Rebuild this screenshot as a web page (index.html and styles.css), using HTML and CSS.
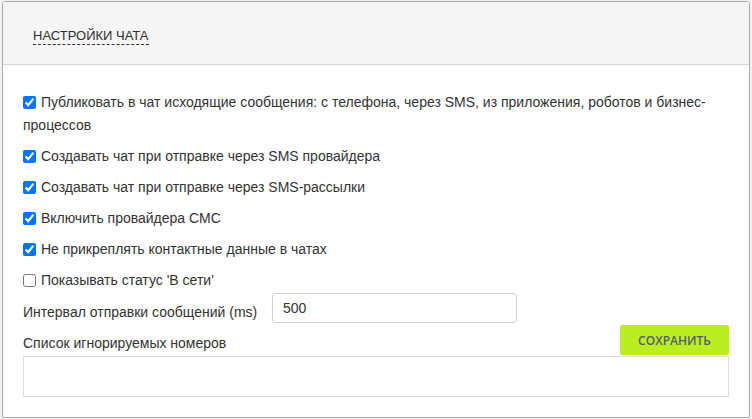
FILE: index.html
```html
<!DOCTYPE html>
<html lang="ru">
<head>
<meta charset="utf-8">
<link rel="stylesheet" href="styles.css">
</head>
<body>
<div class="panel">
  <div class="panel-head">
    <span class="panel-title">Настройки чата</span>
  </div>
  <div class="panel-body">
    <label class="check-row"><input type="checkbox" checked> Публиковать в чат исходящие сообщения: с телефона, через SMS, из приложения, роботов и бизнес-процессов</label>
    <label class="check-row"><input type="checkbox" checked> Создавать чат при отправке через SMS провайдера</label>
    <label class="check-row"><input type="checkbox" checked> Создавать чат при отправке через SMS-рассылки</label>
    <label class="check-row"><input type="checkbox" checked> Включить провайдера СМС</label>
    <label class="check-row"><input type="checkbox" checked> Не прикреплять контактные данные в чатах</label>
    <label class="check-row"><input type="checkbox"> Показывать статус 'В сети'</label>
    <div class="field-row">
      <span class="field-label">Интервал отправки сообщений (ms)</span>
      <input class="text-input" type="text" value="500">
    </div>
    <div class="list-row">
      <span class="list-label">Список игнорируемых номеров</span>
      <button class="save-btn" type="button">Сохранить</button>
    </div>
    <textarea class="list-area"></textarea>
  </div>
</div>
</body>
</html>
```
FILE: styles.css
```css
html, body {
  margin: 0;
  padding: 0;
}
body {
  background: #f2f2f2;
  font-family: Arial, "Liberation Sans", sans-serif;
  color: #333;
  padding: 1px 2px 0 2px;
  width: 748px;
}
.panel {
  border: 1px solid #a9a9a9;
  border-radius: 3px 3px 0 0;
  background: #fff;
}
.panel-head {
  background: #f5f5f5;
  border-bottom: 1px solid #d6d6d6;
  height: 63px;
  padding-left: 30px;
  box-sizing: border-box;
  padding-top: 24px;
}
.panel-title {
  font-size: 13px;
  text-transform: uppercase;
  color: #2f2f2f;
  border-bottom: 1px dashed #333;
  line-height: 15px;
  display: inline-block;
  padding-bottom: 1px;
}
.panel-body {
  padding: 26px 20px 20px 20px;
}
.check-row {
  display: block;
  font-size: 14px;
  line-height: 23px;
  margin-bottom: 8px;
}
.check-row input {
  width: 13px;
  height: 13px;
  margin: 0 1px 0 0;
  vertical-align: -2px;
}
.field-row {
  display: flex;
  align-items: flex-start;
  margin-top: -7px;
}
.field-label {
  font-size: 14px;
  line-height: 23px;
  margin-top: 8px;
  width: 249px;
  flex: none;
}
.text-input {
  width: 245px;
  height: 30px;
  box-sizing: border-box;
  border: 1px solid #d0d0d0;
  border-radius: 3px;
  padding: 0 10px;
  font-family: Arial, "Liberation Sans", sans-serif;
  font-size: 14px;
  color: #333;
  outline: none;
  padding-bottom: 1px;
}
.list-row {
  display: flex;
  align-items: flex-end;
  justify-content: space-between;
  margin-top: 1px;
}
.list-label {
  font-size: 14px;
  line-height: 23px;
}
.save-btn {
  width: 109px;
  height: 30px;
  background: #bbed21;
  border: none;
  border-radius: 2px;
  font-family: "Open Sans", Arial, sans-serif;
  font-size: 12px;
  font-weight: 600;
  text-transform: uppercase;
  color: #535c69;
  padding: 0;
}
.list-area {
  display: block;
  width: 100%;
  height: 41px;
  box-sizing: border-box;
  border: 1px solid #dcdcdc;
  resize: none;
  margin: 1px 0 0 0;
  outline: none;
}
```
